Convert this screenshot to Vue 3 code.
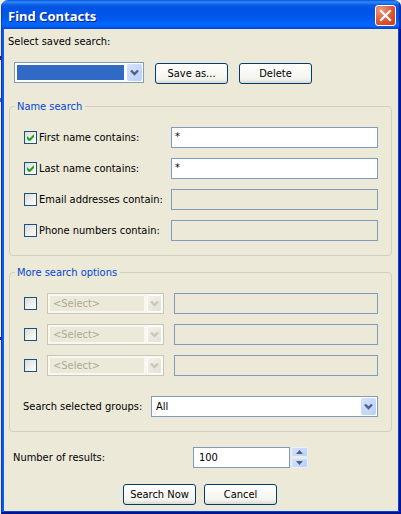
<script setup>
import { ref } from 'vue'

const savedSearch = ref('')
const nameFields = ref([
  { id: 'first', label: 'First name contains:', on: true, value: '*' },
  { id: 'last', label: 'Last name contains:', on: true, value: '*' },
  { id: 'email', label: 'Email addresses contain:', on: false, value: '' },
  { id: 'phone', label: 'Phone numbers contain:', on: false, value: '' }
])
const options = ref([
  { id: 1, on: false, field: '<Select>', value: '' },
  { id: 2, on: false, field: '<Select>', value: '' },
  { id: 3, on: false, field: '<Select>', value: '' }
])
const group = ref('All')
const results = ref('100')

function step(amount) {
  results.value = String(Math.max(0, Number(results.value) + amount))
}
</script>

<template>
  <div class="desktop">
    <form class="window" @submit.prevent>
      <header class="titlebar">
        <h1>Find Contacts</h1>
        <button type="button" class="close" aria-label="Close">
          <svg viewBox="0 0 21 21" width="21" height="21" aria-hidden="true">
            <path d="M6 6L15 15M15 6L6 15" stroke="#fff" stroke-width="2.2" stroke-linecap="square" />
          </svg>
        </button>
      </header>

      <main class="client">
        <label class="saved-label" for="saved">Select saved search:</label>
        <div class="saved-row">
          <div class="combo saved">
            <select id="saved" v-model="savedSearch">
              <option value=""></option>
            </select>
            <span class="arrow">
              <svg viewBox="0 0 9 7" width="9" height="7" aria-hidden="true"><path d="M1 1.500L4.500 5L8 1.500" /></svg>
            </span>
          </div>
          <button type="button" class="btn">Save as...</button>
          <button type="button" class="btn">Delete</button>
        </div>

        <fieldset>
          <legend>Name search</legend>
          <div class="rows">
            <div v-for="f in nameFields" :key="f.id" class="name-row">
              <label class="check">
                <input v-model="f.on" type="checkbox" />
                <svg v-if="f.on" viewBox="0 0 7 7" width="7" height="7" aria-hidden="true">
                  <path d="M0 2v3l2 2h1l4-4V0L2.500 4.500z" />
                </svg>
                <span>{{ f.label }}</span>
              </label>
              <input v-model="f.value" class="text" type="text" :aria-label="f.label" :disabled="!f.on" />
            </div>
          </div>
        </fieldset>

        <fieldset>
          <legend>More search options</legend>
          <div class="rows">
            <div v-for="o in options" :key="o.id" class="option-row">
              <label class="check">
                <input v-model="o.on" type="checkbox" :aria-label="'Use option ' + o.id" />
                <svg v-if="o.on" viewBox="0 0 7 7" width="7" height="7" aria-hidden="true">
                  <path d="M0 2v3l2 2h1l4-4V0L2.500 4.500z" />
                </svg>
              </label>
              <div class="combo field">
                <select v-model="o.field" :disabled="!o.on" :aria-label="'Field ' + o.id">
                  <option>&lt;Select&gt;</option>
                </select>
                <span class="arrow">
                  <svg viewBox="0 0 9 7" width="9" height="7" aria-hidden="true"><path d="M1 1.500L4.500 5L8 1.500" /></svg>
                </span>
              </div>
              <input v-model="o.value" class="text" type="text" :aria-label="'Value ' + o.id" :disabled="!o.on" />
            </div>
          </div>
          <div class="group-row">
            <label for="group">Search selected groups:</label>
            <div class="combo group">
              <select id="group" v-model="group">
                <option>All</option>
              </select>
              <span class="arrow">
                <svg viewBox="0 0 9 7" width="9" height="7" aria-hidden="true"><path d="M1 1.500L4.500 5L8 1.500" /></svg>
              </span>
            </div>
          </div>
        </fieldset>

        <div class="results-row">
          <label for="results">Number of results:</label>
          <input id="results" v-model="results" class="text number" type="text" inputmode="numeric" />
          <div class="spinner">
            <button type="button" aria-label="More" @click="step(1)">
              <svg viewBox="0 0 7 4" width="7" height="4" aria-hidden="true"><path d="M0 4L3.500 0L7 4z" /></svg>
            </button>
            <button type="button" aria-label="Fewer" @click="step(-1)">
              <svg viewBox="0 0 7 4" width="7" height="4" aria-hidden="true"><path d="M0 0L3.500 4L7 0z" /></svg>
            </button>
          </div>
        </div>

        <div class="actions">
          <button type="submit" class="btn">Search Now</button>
          <button type="button" class="btn">Cancel</button>
        </div>
      </main>
    </form>
  </div>
</template>

<style>
body {
  background: #f6f5ee;
}
</style>

<style scoped>
* {
  box-sizing: border-box;
}

.desktop {
  padding-left: 1px;
  background: linear-gradient(#f3f1df 56px, #5c1030 56px 60px, #f6f5ee 60px 98px, #2f66d8 98px 102px, #f6f5ee 102px 337px, #0a2bb0 337px 340px, #f1f1ee 340px);
  font: 11px/15px "DejaVu Sans Condensed", "DejaVu Sans", sans-serif;
  color: #000;
}

.window {
  overflow: hidden;
  border-radius: 7px 7px 0 0;
  background: #ece9d8;
}

.titlebar {
  display: flex;
  align-items: center;
  justify-content: space-between;
  height: 29px;
  padding: 2px 5px 0 7px;
  background: linear-gradient(#0a5be0 0, #2f8afb 2px, #0a5ce6 5px, #0054e3 9px, #0058ec 18px, #0267ff 24px, #0263fb 26px, #0144cf 29px);
  box-shadow: inset -2px 0 1px #0a2fb0, inset 1px 0 #0a3fd0;
}

h1 {
  margin: 0;
  font: bold 13px/20px "Noto Sans", "Open Sans", sans-serif;
  color: #fff;
  text-shadow: 1px 1px #0a1f83;
}

.close {
  display: flex;
  width: 21px;
  height: 21px;
  padding: 0;
  border: 1px solid #fff;
  border-radius: 3px;
  background: radial-gradient(circle at 25% 20%, #ee9a80, #e0593a 50%, #cc3a12);
}

.close svg {
  flex: none;
  margin: -1px;
}

.client {
  padding: 5px 7px 7px 6px;
  border: solid #001590;
  border-width: 0 2px 2px 1px;
  border-left-color: #0831d9;
  box-shadow: inset 2px 0 #0a5cf0, inset -1px -1px #0840e0;
}

.saved-label {
  display: block;
}

.saved-row {
  display: flex;
  gap: 11px;
  margin: 13px 0 15px 6px;
}

.combo {
  position: relative;
  height: 21px;
}

.combo select {
  display: block;
  width: 100%;
  height: 21px;
  margin: 0;
  padding: 2px 19px 2px 4px;
  border: 1px solid #7f9db9;
  border-radius: 0;
  outline: 0;
  appearance: none;
  background: #fff;
  color: #000;
  font: inherit;
}

.arrow {
  position: absolute;
  top: 2px;
  right: 2px;
  display: flex;
  align-items: center;
  justify-content: center;
  width: 15px;
  height: 17px;
  border-radius: 2px;
  background: linear-gradient(135deg, #d6e2fd, #b9cffb);
  pointer-events: none;
}

.arrow path {
  fill: none;
  stroke: #4d6185;
  stroke-width: 2.4;
}

.saved {
  width: 130px;
}

.combo.saved select {
  padding-left: 2px;
  background: linear-gradient(#316ac5, #316ac5) content-box, #fff;
}

.combo select:disabled {
  border-color: #c9c7ba;
  background: linear-gradient(#ece9d8, #ece9d8) content-box, #f8f7f1;
  padding: 2px 19px 2px 2px;
  color: #aca899;
  opacity: 1;
  text-indent: 3px;
}

select:disabled + .arrow {
  border: 1px solid #fff;
  background: linear-gradient(135deg, #f3f2ea, #e3e1d3);
}

select:disabled + .arrow path {
  stroke: #c9c7ba;
}

.btn {
  min-width: 73px;
  height: 21px;
  padding: 0 6px;
  border: 1px solid #003c74;
  border-radius: 3px;
  background: linear-gradient(#fff, #f3f3ee 80%, #dcd8cc);
  color: #000;
  font: inherit;
  white-space: nowrap;
}

.saved-row .btn {
  margin-top: 1px;
}

fieldset {
  min-width: 0;
  margin: 0 0 9px 1px;
  padding: 13px 13px 14px 5px;
  border: 1px solid #d0d0bf;
  border-radius: 4px;
}

legend {
  padding: 0 3px 0 2px;
  color: #0046d5;
}

.rows {
  display: flex;
  flex-direction: column;
  gap: 10px;
}

.name-row,
.option-row {
  display: flex;
  align-items: center;
  padding-left: 9px;
}

.check {
  position: relative;
  display: flex;
  align-items: center;
  gap: 2px;
  white-space: nowrap;
}

.name-row .check {
  width: 147px;
  flex: none;
}

.check input {
  flex: none;
  width: 13px;
  height: 13px;
  margin: 0;
  border: 1px solid #1c5180;
  appearance: none;
  background: linear-gradient(135deg, #dcdcd7, #fff);
}

.check svg {
  position: absolute;
  left: 3px;
  fill: #21a121;
  pointer-events: none;
}

.text {
  flex: 1;
  min-width: 0;
  height: 21px;
  margin: 0;
  padding: 0 3px;
  border: 1px solid #7f9db9;
  border-radius: 0;
  outline: 0;
  background: #fff;
  color: #000;
  font: inherit;
}

.name-row .text {
  padding-bottom: 3px;
}

.text:disabled {
  background: #ece9d8;
}

.option-row .field {
  flex: none;
  width: 117px;
  margin: 0 10px;
}

.group-row {
  display: flex;
  align-items: center;
  margin-top: 20px;
  padding-left: 8px;
}

.group-row label {
  flex: none;
  width: 128px;
  white-space: nowrap;
}

.group {
  flex: 1;
}

.results-row {
  display: flex;
  align-items: center;
  margin-top: 15px;
  padding-left: 5px;
}

.results-row label {
  width: 180px;
}

.results-row .number {
  flex: none;
  width: 97px;
  padding-left: 5px;
}

.spinner {
  display: flex;
  flex-direction: column;
  gap: 1px;
  width: 17px;
  height: 21px;
  margin-left: 1px;
}

.spinner button {
  display: flex;
  flex: 1;
  align-items: center;
  justify-content: center;
  padding: 0;
  border: 1px solid #e8effe;
  border-radius: 2px;
  background: linear-gradient(135deg, #d6e2fd, #b9cffb);
}

.spinner path {
  fill: #4d6185;
}

.actions {
  display: flex;
  justify-content: center;
  gap: 8px;
  margin-top: 16px;
}
</style>
